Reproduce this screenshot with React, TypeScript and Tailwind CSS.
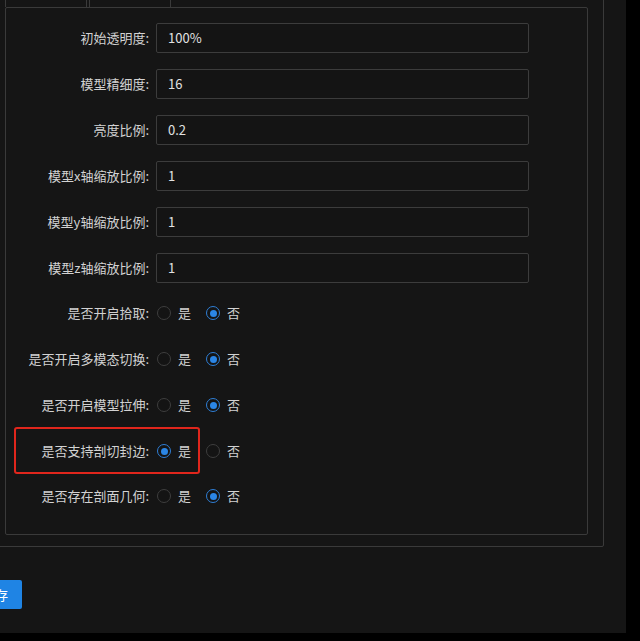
import React from "react";

const inputRows = [
    { label: "初始透明度:", value: "100%" },
    { label: "模型精细度:", value: "16" },
    { label: "亮度比例:", value: "0.2" },
    { label: "模型x轴缩放比例:", value: "1" },
    { label: "模型y轴缩放比例:", value: "1" },
    { label: "模型z轴缩放比例:", value: "1" },
];

const radioRows = [
    { label: "是否开启拾取:", yes: false, nudge: "-mt-[1px]" },
    { label: "是否开启多模态切换:", yes: false, nudge: "" },
    { label: "是否开启模型拉伸:", yes: false, nudge: "" },
    { label: "是否支持剖切封边:", yes: true, nudge: "" },
    { label: "是否存在剖面几何:", yes: false, nudge: "-mt-[1px]" },
];

function Radio({ checked, text }: { checked: boolean; text: string }) {
    return (
        <label className="flex items-center gap-[7px]">
            {checked ? (
                <span className="w-[14px] h-[14px] rounded-full border border-[#2f7fd6] bg-[#141414] flex items-center justify-center">
                    <span className="w-[7px] h-[7px] rounded-full bg-[#2b86e6]" />
                </span>
            ) : (
                <span className="w-[14px] h-[14px] rounded-full border border-[#3e3e3e] bg-[#141414]" />
            )}
            <span className="text-[13px] text-[#d2d2d2]">{text}</span>
        </label>
    );
}

export default function App() {
    return (
        <div
            className="w-[640px] h-[641px] bg-black overflow-hidden"
            style={{ fontFamily: '"Noto Sans CJK SC", "Noto Sans", sans-serif' }}
        >
            <div className="relative w-[626px] h-[633px] bg-[#151515] overflow-hidden flex flex-col">
                {/* settings panel */}
                <div className="-ml-[10px] -mt-[20px] w-[614px] border border-[#3a3a3a] rounded-[2px] pl-[14px] pr-[15px] pb-[11px]">
                    {/* tabs */}
                    <div className="flex gap-[2px] h-[26px]">
                        <div className="w-[82px] border-x border-t border-[#3a3a3a]" />
                        <div className="w-[82px] border-x border-t border-[#3a3a3a]" />
                    </div>

                    <div className="w-[583px] border border-[#3a3a3a] rounded-[2px] pt-[15px] pb-[23px] flex flex-col gap-[16px]">
                        {inputRows.map((row) => (
                            <div key={row.label} className="flex items-center h-[30px]">
                                <div className="w-[143px] text-right text-[13px] text-[#d2d2d2] whitespace-nowrap">
                                    {row.label}
                                </div>
                                <div className="ml-[7px] w-[373px] h-[30px] border border-[#3c3c3c] rounded-[2px] bg-[#141414] pl-[11px] flex items-center text-[13px] text-[#e2e2e2]">
                                    {row.value}
                                </div>
                            </div>
                        ))}
                        {radioRows.map((row) => (
                            <div key={row.label} className={`flex items-center h-[30px] ${row.nudge}`}>
                                <div className="w-[143px] text-right text-[13px] text-[#d2d2d2] whitespace-nowrap">
                                    {row.label}
                                </div>
                                <div className="ml-[8px] flex items-center gap-[15px]">
                                    <Radio checked={row.yes} text="是" />
                                    <Radio checked={!row.yes} text="否" />
                                </div>
                            </div>
                        ))}
                    </div>
                </div>

                {/* save button, partly scrolled out on the left */}
                <button className="mt-[33px] -ml-[32px] w-[54px] h-[29px] bg-[#1f84e4] rounded-[2px] text-white text-[13px]">
                    保存
                </button>

                {/* red highlight annotation */}
                <div className="absolute left-[14px] top-[427px] w-[186px] h-[47px] border-2 border-[#e0261c] rounded-[3px]" />
            </div>
        </div>
    );
}
